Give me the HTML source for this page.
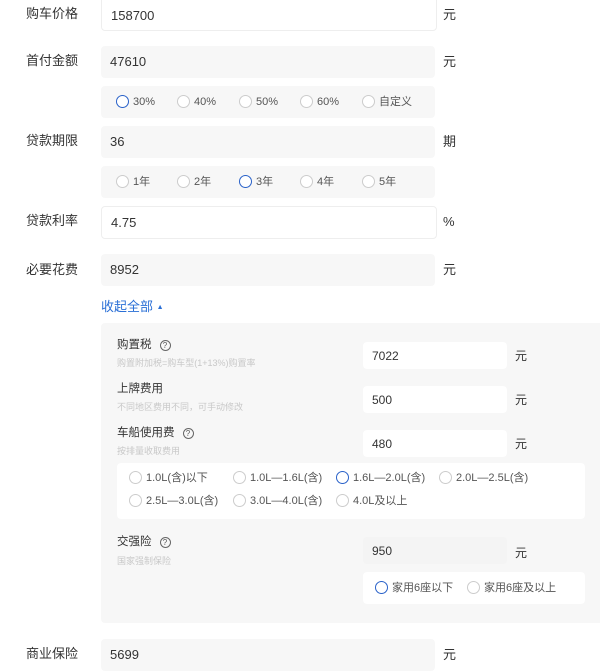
<!DOCTYPE html>
<html><head><meta charset="utf-8"><style>
*{margin:0;padding:0;box-sizing:border-box}
body{width:600px;height:672px;overflow:hidden;background:#fff;font-family:"Liberation Sans","Noto Sans CJK SC",sans-serif;color:#333;position:relative;font-size:13px}
.a{position:absolute}
.lbl{position:absolute;left:26px;font-size:13px;color:#333;line-height:16px}
.inp{position:absolute;background:#f7f7f7;border-radius:4px;font-size:13px;line-height:16px;padding-left:9px;color:#333;display:flex;align-items:center}
.s{font-size:12px}
.w{background:#fff;border:1px solid #eee}
.unit{position:absolute;font-size:13px;line-height:16px}
.opt{position:absolute;background:#f7f7f7;border-radius:4px}
.r{position:absolute;font-size:11px;color:#555;line-height:14px;white-space:nowrap}
.r i{display:inline-block;width:13px;height:13px;border:1px solid #ccc;border-radius:50%;vertical-align:-3px;margin-right:4px;background:#fff}
.r i.on{border-color:#2a62c9;border-width:1.5px}
.sub{position:absolute;left:117px;font-size:9px;color:#c8c8c8;line-height:12px}
.t{position:absolute;left:117px;font-size:11.5px;color:#333;line-height:14px}
.q{display:inline-block;width:11px;height:11px;border:1px solid #666;border-radius:50%;font-size:8px;line-height:9px;text-align:center;margin-left:8px;vertical-align:0px;color:#555}
</style></head><body>
<div class="lbl" style="top:6px">购车价格</div>
<div class="inp w" style="left:101px;top:-4px;width:336px;height:35px;padding-top:4px">158700</div>
<div class="unit" style="left:443px;top:7px">元</div>

<div class="lbl" style="top:53px">首付金额</div>
<div class="inp" style="left:101px;top:46px;width:334px;height:32px">47610</div>
<div class="unit" style="left:443px;top:54px">元</div>
<div class="opt" style="left:101px;top:86px;width:334px;height:32px"></div>
<div class="r" style="left:116px;top:95px"><i class="on"></i>30%</div>
<div class="r" style="left:177px;top:95px"><i></i>40%</div>
<div class="r" style="left:239px;top:95px"><i></i>50%</div>
<div class="r" style="left:300px;top:95px"><i></i>60%</div>
<div class="r" style="left:362px;top:95px"><i></i>自定义</div>

<div class="lbl" style="top:133px">贷款期限</div>
<div class="inp" style="left:101px;top:126px;width:334px;height:32px">36</div>
<div class="unit" style="left:443px;top:134px">期</div>
<div class="opt" style="left:101px;top:166px;width:334px;height:32px"></div>
<div class="r" style="left:116px;top:175px"><i></i>1年</div>
<div class="r" style="left:177px;top:175px"><i></i>2年</div>
<div class="r" style="left:239px;top:175px"><i class="on"></i>3年</div>
<div class="r" style="left:300px;top:175px"><i></i>4年</div>
<div class="r" style="left:362px;top:175px"><i></i>5年</div>

<div class="lbl" style="top:213px">贷款利率</div>
<div class="inp w" style="left:101px;top:206px;width:336px;height:33px">4.75</div>
<div class="unit" style="left:443px;top:214px">%</div>

<div class="lbl" style="top:262px">必要花费</div>
<div class="inp" style="left:101px;top:254px;width:334px;height:32px">8952</div>
<div class="unit" style="left:443px;top:262px">元</div>

<div class="a" style="left:101px;top:299px;font-size:13px;color:#2a6fd6;line-height:16px">收起全部 <span style="font-size:7px;vertical-align:2px">▲</span></div>

<div class="a" style="left:101px;top:323px;width:499px;height:300px;background:#f7f7f7;border-radius:4px 0 0 4px"></div>

<div class="t" style="top:338px">购置税<span class="q">?</span></div>
<div class="sub" style="top:357px">购置附加税=购车型(1+13%)购置率</div>
<div class="inp s" style="left:363px;top:342px;width:144px;height:27px;background:#fff">7022</div>
<div class="unit" style="left:515px;top:348px;font-size:12px">元</div>

<div class="t" style="top:382px">上牌费用</div>
<div class="sub" style="top:401px">不同地区费用不同，可手动修改</div>
<div class="inp s" style="left:363px;top:386px;width:144px;height:27px;background:#fff">500</div>
<div class="unit" style="left:515px;top:392px;font-size:12px">元</div>

<div class="t" style="top:426px">车船使用费<span class="q">?</span></div>
<div class="sub" style="top:445px">按排量收取费用</div>
<div class="inp s" style="left:363px;top:430px;width:144px;height:27px;background:#fff">480</div>
<div class="unit" style="left:515px;top:436px;font-size:12px">元</div>

<div class="a" style="left:117px;top:463px;width:468px;height:56px;background:#fff;border-radius:4px"></div>
<div class="r" style="left:129px;top:471px"><i></i>1.0L(含)以下</div>
<div class="r" style="left:233px;top:471px"><i></i>1.0L—1.6L(含)</div>
<div class="r" style="left:336px;top:471px"><i class="on"></i>1.6L—2.0L(含)</div>
<div class="r" style="left:439px;top:471px"><i></i>2.0L—2.5L(含)</div>
<div class="r" style="left:129px;top:494px"><i></i>2.5L—3.0L(含)</div>
<div class="r" style="left:233px;top:494px"><i></i>3.0L—4.0L(含)</div>
<div class="r" style="left:336px;top:494px"><i></i>4.0L及以上</div>

<div class="t" style="top:535px">交强险<span class="q">?</span></div>
<div class="sub" style="top:555px">国家强制保险</div>
<div class="inp s" style="left:363px;top:537px;width:144px;height:27px;background:#f4f4f4">950</div>
<div class="unit" style="left:515px;top:545px;font-size:12px">元</div>
<div class="a" style="left:363px;top:572px;width:222px;height:32px;background:#fff;border-radius:4px"></div>
<div class="r" style="left:375px;top:581px"><i class="on"></i>家用6座以下</div>
<div class="r" style="left:467px;top:581px"><i></i>家用6座及以上</div>

<div class="lbl" style="top:646px">商业保险</div>
<div class="inp" style="left:101px;top:639px;width:334px;height:32px">5699</div>
<div class="unit" style="left:443px;top:647px">元</div>
</body></html>
